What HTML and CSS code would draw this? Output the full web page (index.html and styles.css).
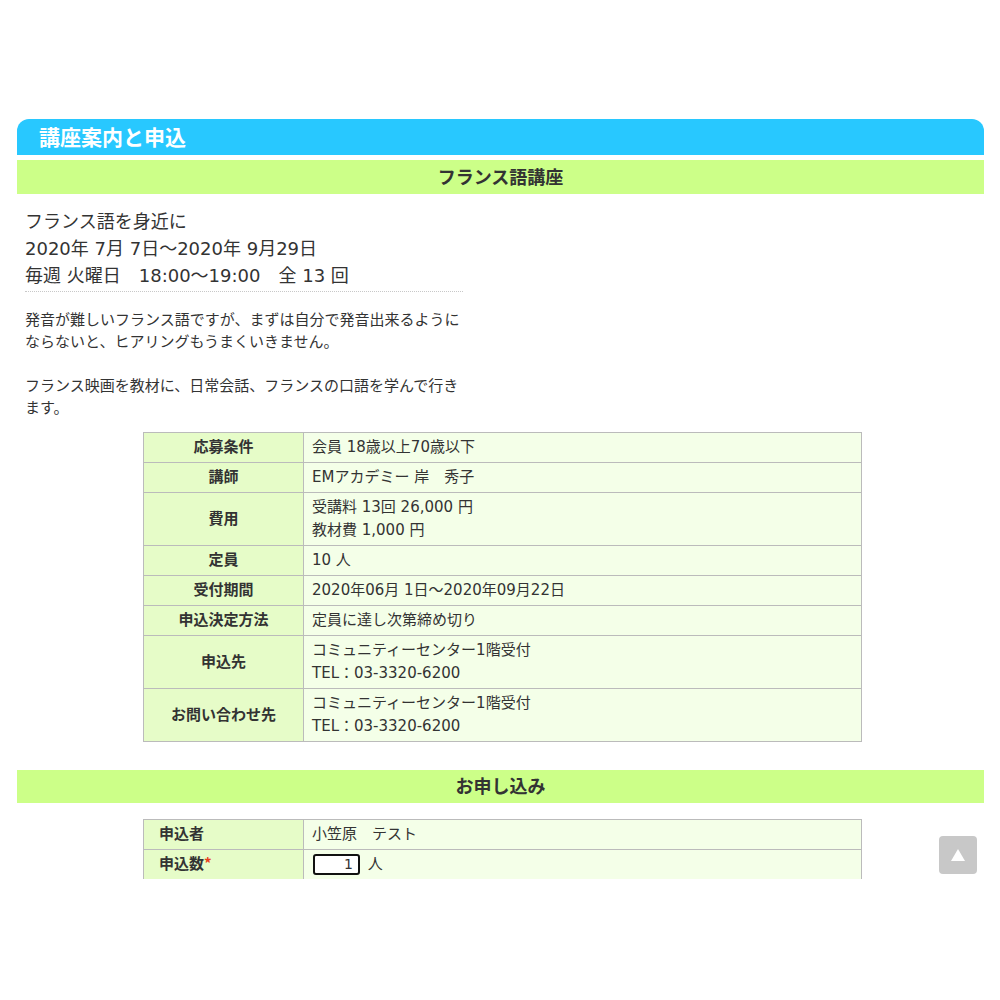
FILE: index.html
```html
<!DOCTYPE html>
<html lang="ja">
<head>
<meta charset="utf-8">
<title>講座案内と申込</title>
<link rel="stylesheet" href="styles.css">
</head>
<body>
<div class="page">
  <div class="container">
    <h1 class="title-bar">講座案内と申込</h1>
    <h2 class="sub-bar">フランス語講座</h2>
    <div class="intro">
      <div class="lead">
        フランス語を身近に<br>
        2020年 7月 7日～2020年 9月29日<br>
        毎週 火曜日　18:00～19:00　全 13 回
      </div>
      <p class="desc">発音が難しいフランス語ですが、まずは自分で発音出来るようにならないと、ヒアリングもうまくいきません。<br><br>フランス映画を教材に、日常会話、フランスの口語を学んで行きます。</p>
    </div>
    <table class="info">
      <tr><th>応募条件</th><td>会員 18歳以上70歳以下</td></tr>
      <tr><th>講師</th><td>EMアカデミー 岸　秀子</td></tr>
      <tr><th>費用</th><td>受講料 13回 26,000 円<br>教材費 1,000 円</td></tr>
      <tr><th>定員</th><td>10 人</td></tr>
      <tr><th>受付期間</th><td>2020年06月 1日～2020年09月22日</td></tr>
      <tr><th>申込決定方法</th><td>定員に達し次第締め切り</td></tr>
      <tr><th>申込先</th><td>コミュニティーセンター1階受付<br>TEL：03-3320-6200</td></tr>
      <tr><th>お問い合わせ先</th><td>コミュニティーセンター1階受付<br>TEL：03-3320-6200</td></tr>
    </table>
    <h2 class="sub-bar second">お申し込み</h2>
    <table class="info form">
      <tr><th>申込者</th><td>小笠原　テスト</td></tr>
      <tr><th>申込数<span class="req">*</span></th><td><span class="num-input">1</span> 人</td></tr>
    </table>
  </div>
</div>
<a class="to-top" href="#"><span class="tri"></span></a>
</body>
</html>
```

FILE: styles.css
```css
html, body {
  margin: 0;
  padding: 0;
  background: #fff;
}
body {
  font-family: "DejaVu Sans", "Noto Sans CJK JP", sans-serif;
  color: #333;
}
.page {
  height: 879px;
  overflow: hidden;
  padding-top: 119px;
  box-sizing: border-box;
}
.container {
  margin: 0 16px 0 17px;
}
.title-bar {
  margin: 0;
  height: 36px;
  line-height: 34px;
  background: #28c8ff;
  color: #fff;
  font-size: 21px;
  font-weight: bold;
  padding-left: 22px;
  border-radius: 12px 12px 0 0;
  font-family: "Noto Sans CJK JP", sans-serif;
}
.sub-bar {
  margin: 5px 0 0;
  height: 34px;
  line-height: 32px;
  background: #ccff88;
  color: #333;
  font-size: 18px;
  font-weight: bold;
  text-align: center;
  font-family: "Noto Sans CJK JP", sans-serif;
}
.sub-bar.second {
  margin-top: 28px;
  height: 33px;
  line-height: 31px;
}
.intro {
  width: 438px;
  margin: 14px 0 0 8px;
}
.lead {
  font-size: 18px;
  line-height: 27px;
  padding-bottom: 2px;
  border-bottom: 1px dotted #c8c8c8;
}
.desc {
  margin: 17px 0 0;
  font-size: 15px;
  line-height: 22px;
}
.info {
  width: 719px;
  margin: 13px 0 0 126px;
  border-collapse: collapse;
  font-size: 15px;
  line-height: 23px;
}
.info th, .info td {
  border: 1px solid #bbbbbb;
  padding: 3px 8px 3px;
}
.info th {
  width: 143px;
  padding: 1px 8px 5px;
  background: #e6fcc8;
  font-weight: bold;
  text-align: center;
  font-family: "Noto Sans CJK JP", sans-serif;
}
.info td {
  background: #f4ffe8;
  text-align: left;
}
.form {
  margin-top: 16px;
}
.form th {
  text-align: left;
  padding-left: 15px;
  width: 136px;
}
.req {
  color: #e8401c;
}
.num-input {
  display: inline-block;
  box-sizing: border-box;
  width: 47px;
  height: 21px;
  border: 2px solid #111;
  border-radius: 3px;
  background: #fff;
  text-align: right;
  padding-right: 5px;
  font-size: 14px;
  line-height: 17px;
  vertical-align: middle;
  margin-left: 1px;
  margin-right: 3px;
}
.to-top {
  position: fixed;
  right: 23px;
  bottom: 126px;
  width: 38px;
  height: 38px;
  background: #c8c8c8;
  border-radius: 4px;
  display: flex;
  align-items: center;
  justify-content: center;
}
.tri {
  width: 0;
  height: 0;
  border-left: 7px solid transparent;
  border-right: 7px solid transparent;
  border-bottom: 12px solid #fff;
}
```
